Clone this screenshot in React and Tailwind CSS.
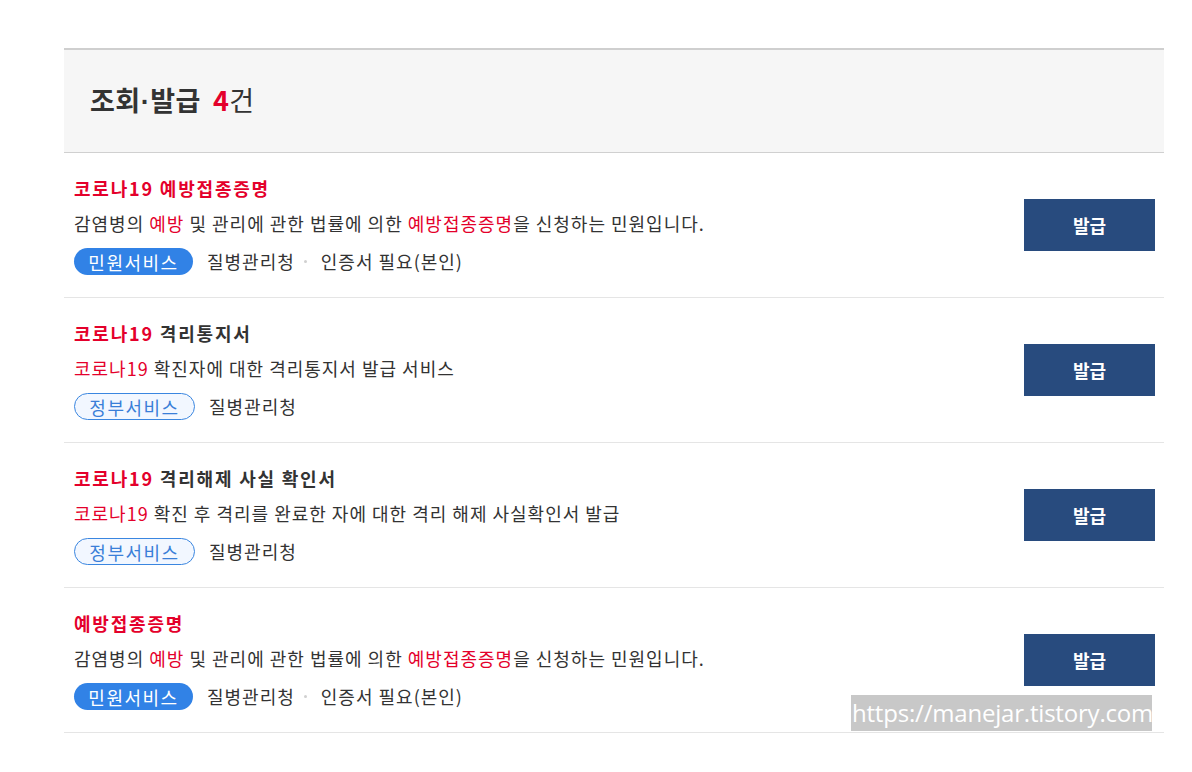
import React from 'react'

const font = { fontFamily: '"Noto Sans CJK KR", "Noto Sans", sans-serif' }

const items = [
  {
    title: [['코로나19 예방접종증명', true]],
    desc: [['감염병의 '], ['예방', true], [' 및 관리에 관한 법률에 의한 '], ['예방접종증명', true], ['을 신청하는 민원입니다.']],
    badge: 'civil',
    cert: true,
  },
  {
    title: [['코로나19', true], [' 격리통지서']],
    desc: [['코로나19', true], [' 확진자에 대한 격리통지서 발급 서비스']],
    badge: 'gov',
  },
  {
    title: [['코로나19', true], [' 격리해제 사실 확인서']],
    desc: [['코로나19', true], [' 확진 후 격리를 완료한 자에 대한 격리 해제 사실확인서 발급']],
    badge: 'gov',
  },
  {
    title: [['예방접종증명', true]],
    desc: [['감염병의 '], ['예방', true], [' 및 관리에 관한 법률에 의한 '], ['예방접종증명', true], ['을 신청하는 민원입니다.']],
    badge: 'civil',
    cert: true,
  },
]

function Row({ item }) {
  return (
    <div className="flex items-center border-b border-[#e5e5e5] h-[145px] pl-[10px] pr-[9px]">
      <div className="flex-1 flex flex-col">
        <div className="text-[18px] font-bold leading-[26px] text-[#333] tracking-[1.8px]">
          {item.title.map(([t, red], i) => (
            <span key={i} className={red ? 'text-[#e4002b]' : ''}>{t}</span>
          ))}
        </div>
        <div className="text-[18px] leading-[26px] mt-[9px] text-[#333] tracking-[1px]">
          {item.desc.map(([t, red], i) => (
            <span key={i} className={red ? 'text-[#e4002b]' : ''}>{t}</span>
          ))}
        </div>
        <div className="flex items-center mt-[12px] text-[18px] text-[#333] tracking-[1px]">
          {item.badge === 'civil' ? (
            <span className="inline-flex items-center justify-center h-[27px] w-[119px] rounded-full bg-[#3182e6] text-white text-[18px] leading-none tracking-[1.5px]">
              민원서비스
            </span>
          ) : (
            <span className="inline-flex items-center justify-center h-[27px] w-[121px] rounded-full bg-[#f2f7ff] border border-[#3a86e0] text-[#3a7fd8] text-[18px] leading-none tracking-[1.5px]">
              정부서비스
            </span>
          )}
          <span className="ml-[14px]">질병관리청</span>
          {item.cert && (
            <>
              <span className="ml-[9px] mr-[14px] w-[3px] h-[3px] rounded-full bg-[#d0d0d0]" />
              <span>인증서 필요(본인)</span>
            </>
          )}
        </div>
      </div>
      <button className="w-[131px] h-[52px] bg-[#284b7e] text-white text-[18px] font-bold">발급</button>
    </div>
  )
}

export default function App() {
  return (
    <div className="min-h-[772px] bg-white relative" style={font}>
      <div className="pt-[48px] pl-[64px] w-[1164px]">
        <div className="border-t-2 border-[#cfcfcf] bg-[#f6f6f6] h-[105px] border-b border-b-[#d0d0d0] flex items-center pl-[26px]">
          <h2 className="text-[27px] font-bold text-[#333] leading-none tracking-[0.5px]">
            조회<span style={{ fontFamily: '"Liberation Sans", sans-serif' }}>·</span>발급
            <span className="text-[#e4002b] ml-[12px]">4</span>
            <span className="font-normal">건</span>
          </h2>
        </div>
        {items.map((it, i) => (
          <Row key={i} item={it} />
        ))}
      </div>
      <div
        className="absolute left-[851px] top-[695px] w-[301px] h-[36px] bg-[#c8c8c8] text-white text-[24px] leading-[36px] pl-[1px] tracking-[-0.2px] overflow-hidden whitespace-nowrap"
        style={{ fontFamily: '"Open Sans", "Noto Sans", sans-serif' }}
      >
        https://manejar.tistory.com
      </div>
    </div>
  )
}
